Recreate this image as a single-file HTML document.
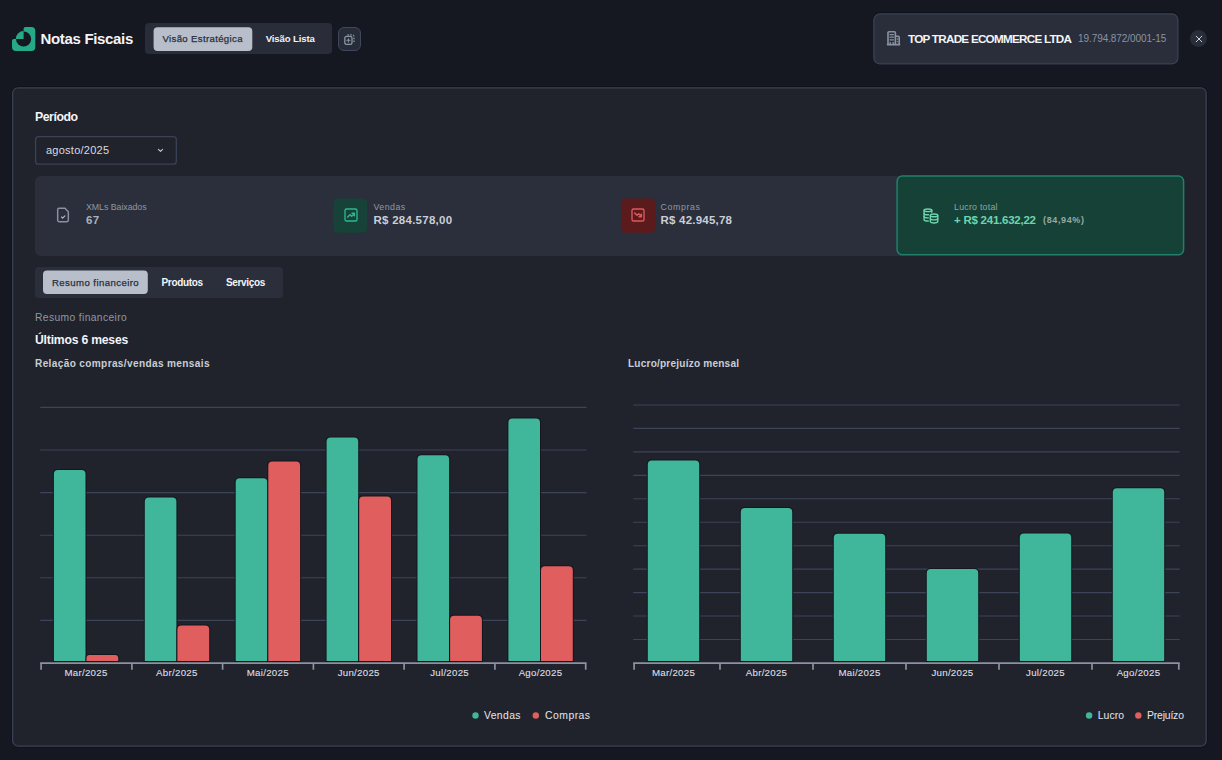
<!DOCTYPE html>
<html lang="pt-BR">
<head>
<meta charset="utf-8">
<title>Notas Fiscais</title>
<style>
*{box-sizing:border-box;margin:0;padding:0}
html,body{width:1222px;height:760px;overflow:hidden}
body{background:#151821;font-family:"Liberation Sans",sans-serif;color:#e5e7eb;position:relative}
.abs{position:absolute}
.t{position:absolute;white-space:nowrap;line-height:1}
.b{font-weight:bold}
svg{position:absolute;overflow:visible}
.ic{fill:none;stroke-linecap:round;stroke-linejoin:round;stroke-width:2}
</style>
</head>
<body>

<!-- ================= HEADER ================= -->
<svg style="left:10px;top:25px" width="28" height="28" viewBox="0 0 28 28">
  <path d="M15.400 1.900 H21.300 A4 4 0 0 1 25.300 5.900 V22.100 A4 4 0 0 1 21.300 26.100 H6 A4 4 0 0 1 2 22.100 V15.800 A1.800 1.800 0 0 1 3.800 14 H13.600 V3.700 A1.800 1.800 0 0 1 15.400 1.900 Z" fill="#25aa87"/>
  <circle cx="13.6" cy="14" r="7.6" fill="#151821"/>
  <path d="M13.600 14 V6.100 A7.900 7.900 0 0 0 5.700 14 Z" fill="#25aa87"/>
</svg>
<span class="t b" id="t_title" style="left:40.5px;top:31px;font-size:15px;color:#f3f4f6;letter-spacing:-0.327px">Notas Fiscais</span>

<div class="abs" style="left:145px;top:23px;width:187px;height:31px;background:#282d39;border-radius:4px"></div>
<svg style="left:0;top:0" width="400" height="60" viewBox="0 0 400 60"><rect x="153.600" y="27.200" width="98.700" height="23.700" rx="4" fill="#b8bfcb"/></svg>
<span class="t" id="t_tab1" style="left:162.5px;top:33.900px;font-size:9.600px;-webkit-text-stroke:0.250px #2a2f3a;color:#2a2f3a;letter-spacing:0.345px">Visão Estratégica</span>
<span class="t b" id="t_tab2" style="left:265.700px;top:34.200px;font-size:9.600px;color:#f3f4f6;letter-spacing:-0.128px">Visão Lista</span>

<div class="abs" style="left:338px;top:27px;width:23px;height:24px;background:#272c39;border:1px solid #40475c;border-radius:6px"></div>
<svg class="ic" style="left:344px;top:33.500px;stroke:#8e96a6;stroke-width:1.250" width="11" height="11" viewBox="0 0 11 11">
  <rect x="0.800" y="2.300" width="7.200" height="8" rx="1.900"/>
  <path d="M4.400 4.700v3.200M2.800 6.300h3.200" stroke-width="1.100"/>
  <path d="M3.400 0.800H8a2 2 0 0 1 2 2V8.400" stroke-dasharray="1.500 1.300" stroke-linecap="butt"/>
</svg>

<svg style="left:0;top:0" width="1222" height="80" viewBox="0 0 1222 80"><rect x="873.400" y="11.800" width="305.200" height="53" rx="6.500" fill="#0f1219"/><rect x="873.900" y="13.900" width="304" height="50" rx="6" fill="#292e3a" stroke="#3b4257" stroke-width="1.300"/></svg>
<svg class="ic" style="left:886px;top:30.400px;stroke:#8a92a2;stroke-width:1.600" width="15" height="16" viewBox="0 0 15 16">
  <path d="M1.400 14.600H13.600"/>
  <path d="M2 14.500V2.800a1 1 0 0 1 1-1h5.400a1 1 0 0 1 1 1V14.500"/>
  <path d="M9.400 6.200h2.800a1 1 0 0 1 1 1V14.500"/>
  <path d="M4 4.600h3.400M4 7.200h3.400M4 9.800h3.400M4.200 14v-1.700M7.200 14v-1.700M11.300 9h.1M11.300 11.600h.1" stroke-width="1.300"/>
</svg>
<span class="t b" id="t_company" style="left:908px;top:32.600px;font-size:11.700px;color:#f3f4f6;letter-spacing:-0.747px">TOP TRADE ECOMMERCE LTDA</span>
<span class="t" id="t_cnpj" style="left:1078px;top:34px;font-size:10px;color:#8b93a2;letter-spacing:-0.072px">19.794.872/0001-15</span>

<div class="abs" style="left:1190px;top:30px;width:17px;height:17px;border-radius:50%;background:#282d39"></div>
<svg class="ic" style="left:1194.700px;top:34.900px;stroke:#cdd1d8;stroke-width:1" width="8" height="8" viewBox="0 0 8 8">
  <path d="M1.200 1.200L6.800 6.800M6.800 1.200L1.200 6.800"/>
</svg>

<!-- ================= PANEL ================= -->
<svg style="left:0;top:0" width="1222" height="760" viewBox="0 0 1222 760"><rect x="11.700" y="86.900" width="1195.400" height="660.200" rx="6.300" fill="none" stroke="#0b0d12" stroke-width="1" stroke-opacity="0.700"/><rect x="12.600" y="87.800" width="1193.600" height="658.400" rx="5.500" fill="#20232c" stroke="#3a4055" stroke-width="1.300"/></svg>

<span class="t b" id="t_periodo" style="left:35px;top:111.300px;font-size:12.300px;color:#f3f4f6;letter-spacing:-0.464px">Período</span>
<svg style="left:0;top:120px" width="200" height="50" viewBox="0 120 200 50"><rect x="35.600" y="136.600" width="140.700" height="27.600" rx="3" fill="none" stroke="#3b4257" stroke-width="1.300"/></svg>
<span class="t" id="t_select" style="left:46px;top:145px;font-size:11px;color:#d7dbe2;letter-spacing:0.244px">agosto/2025</span>
<svg class="ic" style="left:156.500px;top:148px;stroke:#c3c8d2;stroke-width:1.150" width="7" height="5" viewBox="0 0 7 5">
  <path d="M1.400 1.300L3.500 3.300L5.600 1.300"/>
</svg>

<!-- stats bar -->
<div class="abs" style="left:35px;top:176px;width:866px;height:80px;background:#2a2f3b;border-radius:6px 0 0 6px"></div>

<svg class="ic" style="left:55.200px;top:207.300px;stroke:#8a92a1;stroke-width:2.200" width="16" height="16" viewBox="0 0 24 24">
  <path d="M15 2H6a2 2 0 0 0-2 2v16a2 2 0 0 0 2 2h12a2 2 0 0 0 2-2V7Z"/>
  <path d="m9.800 15 1.700 1.700 3.300-3.300" stroke="#b9bec8" stroke-width="1.700"/>
</svg>
<span class="t" id="t_xml" style="left:86px;top:203.300px;font-size:8.800px;color:#8f97a6;letter-spacing:-0.044px">XMLs Baixados</span>
<span class="t b" id="t_67" style="left:86px;top:215px;font-size:11.500px;color:#aab1be;letter-spacing:0.403px">67</span>

<svg style="left:0;top:190px" width="700" height="50" viewBox="0 190 700 50"><rect x="333.400" y="198.500" width="34" height="34.200" rx="4.500" fill="#174237"/><rect x="621.200" y="198.500" width="34" height="34.200" rx="4.500" fill="#5b1b1c"/></svg>
<svg class="ic" style="left:342.600px;top:207.200px;stroke:#2fb890" width="16" height="16" viewBox="0 0 24 24">
  <rect x="3" y="3" width="18" height="18" rx="2.400"/>
  <path d="M7 15l3.500-3.500 2.500 2.500 4-4M13.500 9.500H17V13" stroke-width="2.200"/>
</svg>
<span class="t" id="t_vendas" style="left:373.500px;top:203.300px;font-size:8.800px;color:#8f97a6;letter-spacing:0.468px">Vendas</span>
<span class="t b" id="t_vendasv" style="left:373.500px;top:215px;font-size:11.500px;color:#c9ced7;letter-spacing:0.262px">R$ 284.578,00</span>

<svg class="ic" style="left:629.700px;top:207.200px;stroke:#e05a5e" width="16" height="16" viewBox="0 0 24 24">
  <rect x="3" y="3" width="18" height="18" rx="2.400"/>
  <path d="M7 9l3.500 3.500 2.500-2.500 4 4M13.500 14.500H17V11" stroke-width="2.200"/>
</svg>
<span class="t" id="t_compras" style="left:660.500px;top:203.300px;font-size:8.800px;color:#8f97a6;letter-spacing:0.619px">Compras</span>
<span class="t b" id="t_comprasv" style="left:660.500px;top:215px;font-size:11.500px;color:#c9ced7;letter-spacing:0.222px">R$ 42.945,78</span>

<svg style="left:0;top:0" width="1222" height="300" viewBox="0 0 1222 300"><rect x="897.100" y="176" width="286.500" height="78.800" rx="5.200" fill="#164137" stroke="#21806a" stroke-width="1.500"/></svg>
<svg class="ic" style="left:921.900px;top:206.600px;stroke:#6dd4ae;stroke-width:1.400" width="18" height="18" viewBox="0 0 18 18">
  <ellipse cx="5.950" cy="3.300" rx="3.850" ry="1.350"/>
  <path d="M2.100 3.300V12.700a3.850 1.350 0 0 0 7.700 0V3.300"/>
  <path d="M2.100 6.400a3.850 1.350 0 0 0 7.700 0M2.100 9.500a3.850 1.350 0 0 0 7.700 0"/>
  <path d="M8.350 8.400V14.600a3.700 1.400 0 0 0 7.400 0V8.400a3.700 1.400 0 0 0-7.400 0Z" fill="#164137" stroke="#164137" stroke-width="3.200"/>
  <ellipse cx="12.050" cy="8.400" rx="3.700" ry="1.400"/>
  <path d="M8.350 8.400V14.600a3.700 1.400 0 0 0 7.400 0V8.400"/>
  <path d="M8.350 11.500a3.700 1.400 0 0 0 7.400 0"/>
</svg>
<span class="t" id="t_lucro" style="left:954px;top:203.300px;font-size:8.800px;color:#8fa69f;letter-spacing:0.242px">Lucro total</span>
<span class="t b" id="t_lucrov" style="left:954px;top:214.500px;font-size:11.500px;color:#6dd4ae;letter-spacing:-0.241px">+ R$ 241.632,22</span>
<span class="t" id="t_pct" style="left:1043px;top:215.800px;font-size:9px;font-weight:bold;color:#94aaa3;letter-spacing:0.638px">(84,94%)</span>

<!-- sub tabs -->
<div class="abs" style="left:35px;top:267px;width:248px;height:31px;background:#2a2f3b;border-radius:4px"></div>
<svg style="left:0;top:260px" width="400" height="40" viewBox="0 260 400 40"><rect x="43" y="270.600" width="104.800" height="23.500" rx="4" fill="#b8bfcb"/></svg>
<span class="t" id="t_rf" style="left:52px;top:277.600px;font-size:9.600px;-webkit-text-stroke:0.250px #2a2f3a;color:#2a2f3a;letter-spacing:0.419px">Resumo financeiro</span>
<span class="t b" id="t_prod" style="left:161.500px;top:277.500px;font-size:10px;color:#f3f4f6;letter-spacing:-0.327px">Produtos</span>
<span class="t b" id="t_serv" style="left:226px;top:277.500px;font-size:10px;color:#f3f4f6;letter-spacing:-0.343px">Serviços</span>

<span class="t" id="t_rf2" style="left:35px;top:313.100px;font-size:10.300px;color:#8f97a5;letter-spacing:0.365px">Resumo financeiro</span>
<span class="t b" id="t_u6m" style="left:35px;top:334px;font-size:12.200px;color:#f3f4f6;letter-spacing:-0.207px">Últimos 6 meses</span>
<span class="t b" id="t_rel" style="left:35px;top:359.100px;font-size:10.100px;color:#c9ced6;letter-spacing:0.349px">Relação compras/vendas mensais</span>
<span class="t b" id="t_lp" style="left:628px;top:359.100px;font-size:10.100px;color:#c9ced6;letter-spacing:0.193px">Lucro/prejuízo mensal</span>

<!-- CHARTS -->
<svg id="charts" style="left:0;top:0" width="1222" height="760" viewBox="0 0 1222 760">
<g stroke="#3d4359" stroke-width="1.100">
<path d="M40.200 407.4H586.500"/>
<path d="M40.200 450.0H586.500"/>
<path d="M40.200 492.6H586.500"/>
<path d="M40.200 535.2H586.500"/>
<path d="M40.200 577.8H586.500"/>
<path d="M40.200 620.4H586.500"/>
<path d="M633.200 405.0H1179.700"/>
<path d="M633.200 428.4H1179.700"/>
<path d="M633.200 451.9H1179.700"/>
<path d="M633.200 475.4H1179.700"/>
<path d="M633.200 498.8H1179.700"/>
<path d="M633.200 522.2H1179.700"/>
<path d="M633.200 545.7H1179.700"/>
<path d="M633.200 569.1H1179.700"/>
<path d="M633.200 592.6H1179.700"/>
<path d="M633.200 616.0H1179.700"/>
<path d="M633.200 639.5H1179.700"/>
</g>
<path d="M53.9 661.1 V474.0 Q53.9 470.0 57.9 470.0 H81.5 Q85.5 470.0 85.5 474.0 V661.1 Z" fill="#40b79a" stroke="#15171d" stroke-width="2" paint-order="stroke"/>
<path d="M86.5 661.1 V658.0 Q86.5 655.0 89.6 655.0 H115.2 Q118.2 655.0 118.2 658.0 V661.1 Z" fill="#e05e5e" stroke="#15171d" stroke-width="2" paint-order="stroke"/>
<path d="M144.8 661.1 V501.4 Q144.8 497.4 148.8 497.4 H172.4 Q176.4 497.4 176.4 501.4 V661.1 Z" fill="#40b79a" stroke="#15171d" stroke-width="2" paint-order="stroke"/>
<path d="M177.4 661.1 V629.6 Q177.4 625.6 181.4 625.6 H205.2 Q209.2 625.6 209.2 629.6 V661.1 Z" fill="#e05e5e" stroke="#15171d" stroke-width="2" paint-order="stroke"/>
<path d="M235.7 661.1 V482.2 Q235.7 478.2 239.7 478.2 H263.3 Q267.3 478.2 267.3 482.2 V661.1 Z" fill="#40b79a" stroke="#15171d" stroke-width="2" paint-order="stroke"/>
<path d="M268.3 661.1 V465.4 Q268.3 461.4 272.3 461.4 H296.1 Q300.1 461.4 300.1 465.4 V661.1 Z" fill="#e05e5e" stroke="#15171d" stroke-width="2" paint-order="stroke"/>
<path d="M326.6 661.1 V441.6 Q326.6 437.6 330.6 437.6 H354.2 Q358.2 437.6 358.2 441.6 V661.1 Z" fill="#40b79a" stroke="#15171d" stroke-width="2" paint-order="stroke"/>
<path d="M359.2 661.1 V500.6 Q359.2 496.6 363.2 496.6 H387.0 Q391.0 496.6 391.0 500.6 V661.1 Z" fill="#e05e5e" stroke="#15171d" stroke-width="2" paint-order="stroke"/>
<path d="M417.5 661.1 V459.3 Q417.5 455.3 421.5 455.3 H445.1 Q449.1 455.3 449.1 459.3 V661.1 Z" fill="#40b79a" stroke="#15171d" stroke-width="2" paint-order="stroke"/>
<path d="M450.1 661.1 V619.8 Q450.1 615.8 454.1 615.8 H477.9 Q481.9 615.8 481.9 619.8 V661.1 Z" fill="#e05e5e" stroke="#15171d" stroke-width="2" paint-order="stroke"/>
<path d="M508.4 661.1 V422.5 Q508.4 418.5 512.4 418.5 H536.0 Q540.0 418.5 540.0 422.5 V661.1 Z" fill="#40b79a" stroke="#15171d" stroke-width="2" paint-order="stroke"/>
<path d="M541.0 661.1 V570.3 Q541.0 566.3 545.0 566.3 H568.8 Q572.8 566.3 572.8 570.3 V661.1 Z" fill="#e05e5e" stroke="#15171d" stroke-width="2" paint-order="stroke"/>
<path d="M647.8 661.1 V464.5 Q647.8 460.5 651.8 460.5 H695.2 Q699.2 460.5 699.2 464.5 V661.1 Z" fill="#40b79a" stroke="#15171d" stroke-width="2" paint-order="stroke"/>
<path d="M740.8 661.1 V512.1 Q740.8 508.1 744.8 508.1 H788.2 Q792.2 508.1 792.2 512.1 V661.1 Z" fill="#40b79a" stroke="#15171d" stroke-width="2" paint-order="stroke"/>
<path d="M833.8 661.1 V537.8 Q833.8 533.8 837.8 533.8 H881.2 Q885.2 533.8 885.2 537.8 V661.1 Z" fill="#40b79a" stroke="#15171d" stroke-width="2" paint-order="stroke"/>
<path d="M926.8 661.1 V573.1 Q926.8 569.1 930.8 569.1 H974.2 Q978.2 569.1 978.2 573.1 V661.1 Z" fill="#40b79a" stroke="#15171d" stroke-width="2" paint-order="stroke"/>
<path d="M1019.8 661.1 V537.6 Q1019.8 533.6 1023.8 533.6 H1067.2 Q1071.2 533.6 1071.2 537.6 V661.1 Z" fill="#40b79a" stroke="#15171d" stroke-width="2" paint-order="stroke"/>
<path d="M1112.8 661.1 V492.2 Q1112.8 488.2 1116.8 488.2 H1160.2 Q1164.2 488.2 1164.2 492.2 V661.1 Z" fill="#40b79a" stroke="#15171d" stroke-width="2" paint-order="stroke"/>
<g stroke="#8c92a0" stroke-width="1.700" fill="none">
<path d="M40.200 663.200H586.500"/>
<path d="M633.200 663.200H1179.700"/>
</g>
<g stroke="#8c92a0" stroke-width="1.700" fill="none">
<path d="M41.1 663.200V669.700"/>
<path d="M131.9 663.200V669.700"/>
<path d="M222.6 663.200V669.700"/>
<path d="M313.4 663.200V669.700"/>
<path d="M404.1 663.200V669.700"/>
<path d="M494.9 663.200V669.700"/>
<path d="M585.7 663.200V669.700"/>
<path d="M634.1 663.200V669.700"/>
<path d="M720.0 663.200V669.700"/>
<path d="M813.0 663.200V669.700"/>
<path d="M906.0 663.200V669.700"/>
<path d="M999.0 663.200V669.700"/>
<path d="M1092.0 663.200V669.700"/>
<path d="M1178.8 663.200V669.700"/>
</g>
<g font-family="Liberation Sans, sans-serif" font-size="9.700" letter-spacing="0.280" fill="#dcdfe4" stroke="#dcdfe4" stroke-width="0.120" text-anchor="middle" class="axl">
<text x="86.0" y="676.200">Mar/2025</text>
<text x="176.9" y="676.200">Abr/2025</text>
<text x="267.8" y="676.200">Mai/2025</text>
<text x="358.7" y="676.200">Jun/2025</text>
<text x="449.6" y="676.200">Jul/2025</text>
<text x="540.5" y="676.200">Ago/2025</text>
<text x="673.5" y="676.200">Mar/2025</text>
<text x="766.5" y="676.200">Abr/2025</text>
<text x="859.5" y="676.200">Mai/2025</text>
<text x="952.5" y="676.200">Jun/2025</text>
<text x="1045.5" y="676.200">Jul/2025</text>
<text x="1138.5" y="676.200">Ago/2025</text>
</g>
<circle cx="475.500" cy="715.500" r="3.200" fill="#40b79a"/><circle cx="535.800" cy="715.500" r="3.200" fill="#e05e5e"/>
<circle cx="1089.100" cy="715.500" r="3.200" fill="#40b79a"/><circle cx="1138.300" cy="715.500" r="3.200" fill="#e05e5e"/>
<g font-family="Liberation Sans, sans-serif" font-size="10.400" fill="#e5e7eb">
<text id="l_vendas" x="484" y="719.200" letter-spacing="0.360">Vendas</text><text id="l_compras" x="545" y="719.200" letter-spacing="0.480">Compras</text>
<text id="l_lucro" x="1097.700" y="719.200" letter-spacing="0.100">Lucro</text><text id="l_prej" x="1147" y="719.200" letter-spacing="-0.170">Prejuízo</text>
</g>
</svg>

</body>
</html>
